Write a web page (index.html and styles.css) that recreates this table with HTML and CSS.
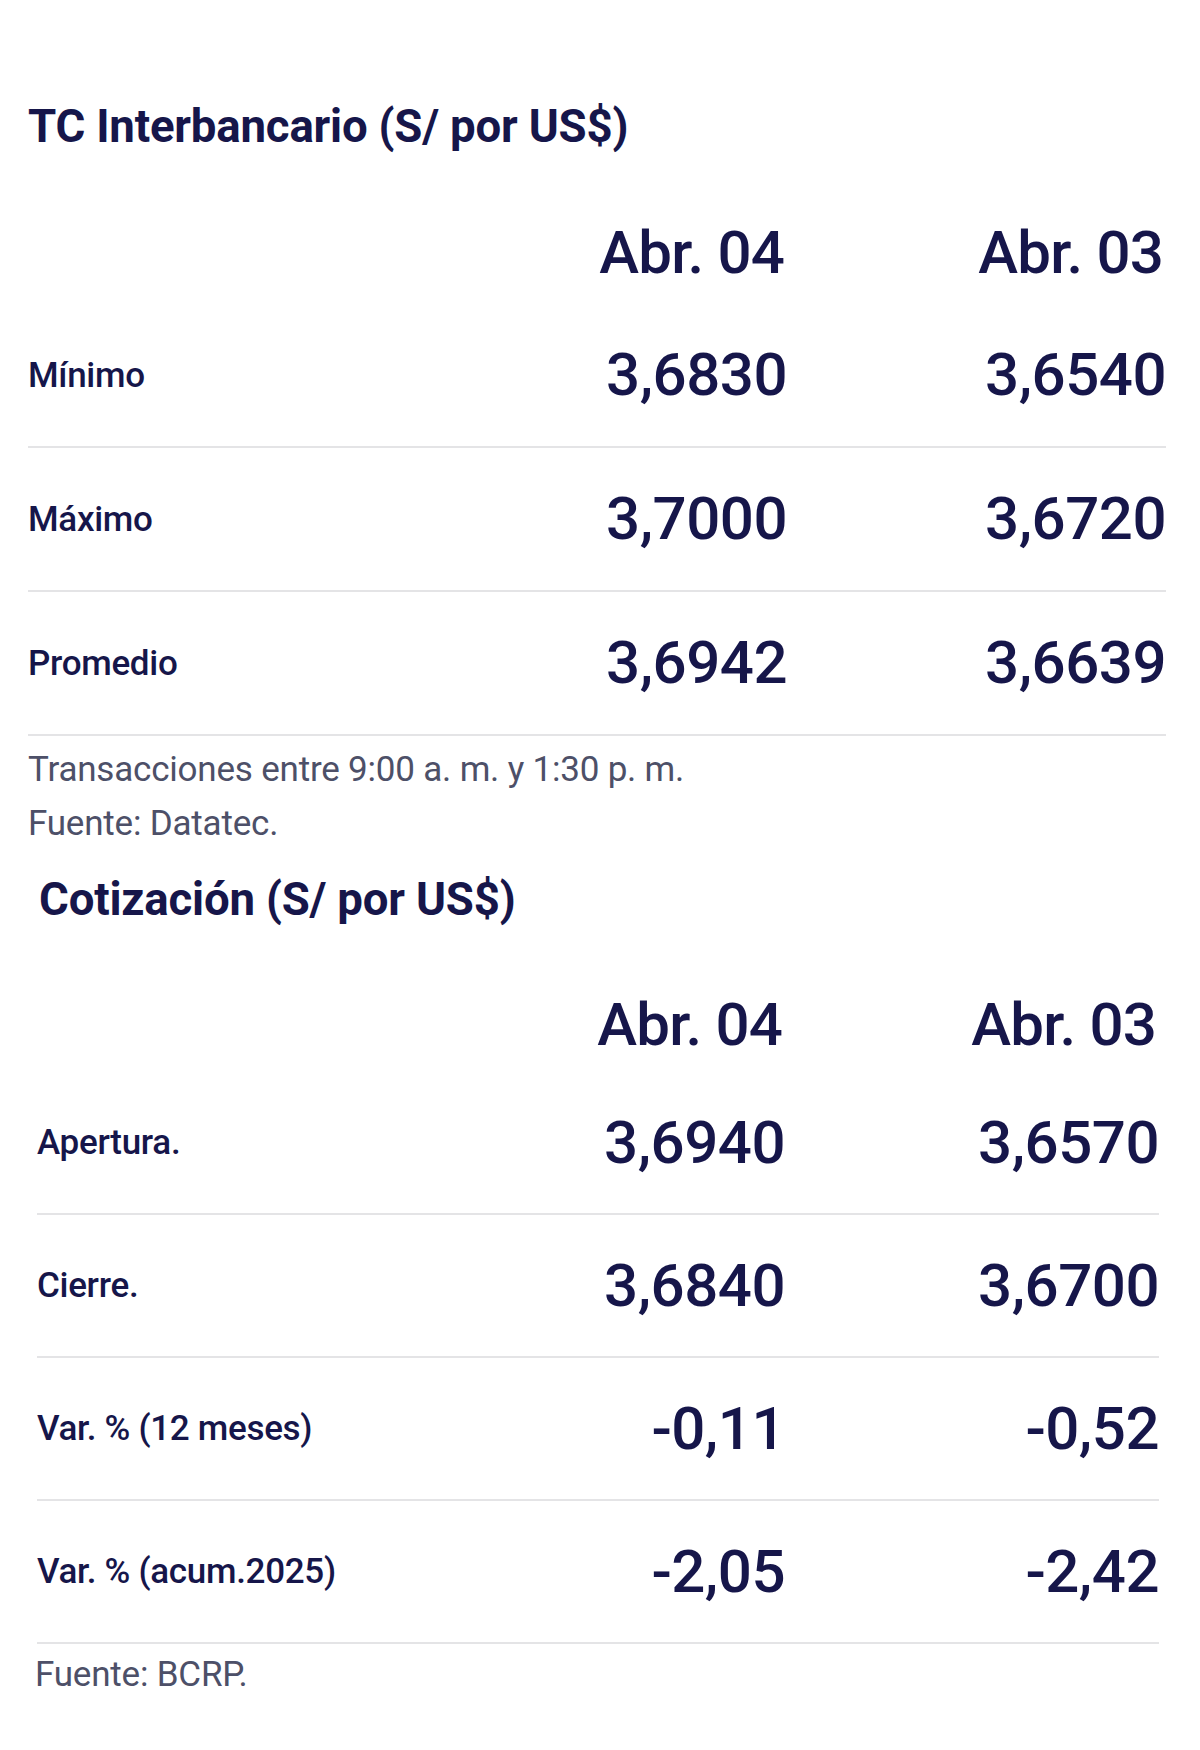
FILE: index.html
```html
<!DOCTYPE html>
<html lang="es">
<head>
<meta charset="utf-8">
<title>Tipo de cambio</title>
<link rel="stylesheet" href="styles.css">
</head>
<body>
<main class="page">
  <section class="block block-inter">
    <h2 class="title">TC Interbancario (S/ por US$)</h2>
    <div class="row head">
      <span class="label"></span>
      <span class="num">Abr. 04</span>
      <span class="num">Abr. 03</span>
    </div>
    <div class="row data">
      <span class="label">Mínimo</span>
      <span class="num">3,6830</span>
      <span class="num">3,6540</span>
    </div>
    <div class="row data">
      <span class="label">Máximo</span>
      <span class="num">3,7000</span>
      <span class="num">3,6720</span>
    </div>
    <div class="row data">
      <span class="label">Promedio</span>
      <span class="num">3,6942</span>
      <span class="num">3,6639</span>
    </div>
    <p class="note note-first">Transacciones entre 9:00 a. m. y 1:30 p. m.</p>
    <p class="note">Fuente: Datatec.</p>
  </section>

  <section class="block block-cot">
    <h2 class="title">Cotización (S/ por US$)</h2>
    <div class="row head">
      <span class="label"></span>
      <span class="num">Abr. 04</span>
      <span class="num">Abr. 03</span>
    </div>
    <div class="row data">
      <span class="label">Apertura.</span>
      <span class="num">3,6940</span>
      <span class="num">3,6570</span>
    </div>
    <div class="row data">
      <span class="label">Cierre.</span>
      <span class="num">3,6840</span>
      <span class="num">3,6700</span>
    </div>
    <div class="row data">
      <span class="label">Var. % (12 meses)</span>
      <span class="num">-0,11</span>
      <span class="num">-0,52</span>
    </div>
    <div class="row data">
      <span class="label">Var. % (acum.2025)</span>
      <span class="num">-2,05</span>
      <span class="num">-2,42</span>
    </div>
    <p class="note note-last">Fuente: BCRP.</p>
  </section>
</main>
</body>
</html>
```

FILE: styles.css
```css
* {
  box-sizing: border-box;
}

html, body {
  margin: 0;
  padding: 0;
  background: #ffffff;
}

body {
  font-family: Roboto, "Liberation Sans", sans-serif;
  color: #16164a;
  width: 1200px;
  height: 1750px;
  overflow: hidden;
}

.page {
  padding-top: 104px;
}

.block {
  display: flex;
  flex-direction: column;
}

.block-inter {
  margin-left: 28px;
  width: 1138px;
  --col2: 379px;
  --row-h: 144px;
  --head-h: 102px;
  --head-gap: 52px;
}

.block-cot {
  margin-left: 37px;
  width: 1122px;
  margin-top: 26px;
  --col2: 374px;
  --row-h: 143px;
  --head-h: 94px;
  --head-gap: 55px;
}

.title {
  margin: 0;
  font-size: 45.6px;
  line-height: 46px;
  height: 46px;
  font-weight: 700;
  letter-spacing: -0.2px;
  color: #16164a;
  white-space: nowrap;
}

.block-cot .title {
  margin-left: 2px;
}

.row {
  display: grid;
  grid-template-columns: 1fr 250px var(--col2);
  align-items: center;
}

.row.head {
  height: var(--head-h);
  margin-top: var(--head-gap);
}

.row.data {
  height: var(--row-h);
  border-bottom: 2px solid #e4e4e6;
}

.label {
  font-size: 35px;
  line-height: 1;
  font-weight: 500;
  letter-spacing: -0.3px;
  white-space: nowrap;
}

.num {
  font-size: 60px;
  line-height: 1;
  font-weight: 500;
  text-align: right;
  letter-spacing: -0.5px;
  white-space: nowrap;
}

.row.head .num {
  font-weight: 500;
  letter-spacing: -0.8px;
  padding-right: 3px;
}

.note {
  margin: 0;
  font-size: 35px;
  line-height: 54px;
  font-weight: 400;
  letter-spacing: -0.2px;
  color: #4d5068;
  white-space: nowrap;
}

.note-first {
  margin-top: 7px;
}

.note-last {
  margin-top: 4px;
  margin-left: -2px;
}
```
